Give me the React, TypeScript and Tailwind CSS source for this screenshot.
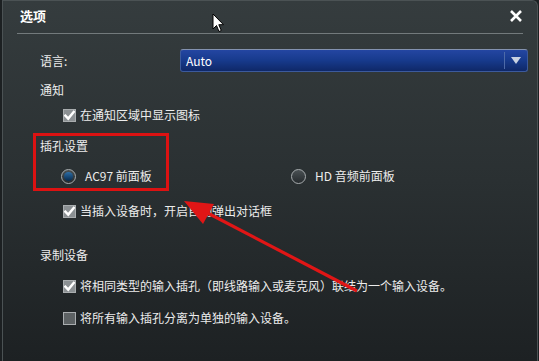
import type React from "react";

const font = '"Noto Sans CJK SC", "Noto Sans", sans-serif';

const Checkbox: React.FC<{ checked?: boolean }> = ({ checked = false }) => (
  <div
    className={`w-[13px] h-[13px] shrink-0 border border-[#a9adaf] flex items-center justify-center ${
      checked ? "bg-[#8b9093]" : "bg-[#5d6264]"
    }`}
  >
    {checked && (
      <svg width="11" height="11" viewBox="0 0 12 12">
        <path
          d="M1.5 6.2 L4.6 9.4 L10.6 2"
          fill="none"
          stroke="#ffffff"
          strokeWidth="2.6"
          strokeLinecap="square"
        />
      </svg>
    )}
  </div>
);

const Radio: React.FC<{ selected?: boolean }> = ({ selected = false }) => (
  <div className="w-[15px] h-[15px] shrink-0 rounded-full border border-[#a7acae] bg-gradient-to-b from-[#4a5154] to-[#262b2e] flex items-center justify-center">
    {selected && (
      <div className="w-[9px] h-[9px] rounded-full bg-gradient-to-b from-[#2d6fa8] to-[#082a4d]" />
    )}
  </div>
);

const CheckRow: React.FC<{ checked?: boolean; label: string; className: string }> = ({
  checked,
  label,
  className,
}) => (
  <div className={`flex items-center h-[18px] pl-[60px] gap-[4px] ${className}`}>
    <Checkbox checked={checked} />
    <span className="text-[12px] text-[#ececec] whitespace-nowrap">{label}</span>
  </div>
);

export default function App() {
  return (
    <div
      className="relative w-[539px] h-[361px] overflow-hidden bg-[#1c2022]"
      style={{ fontFamily: font }}
    >
      <div className="w-[536px] h-[361px] ml-[2px] border-l border-t border-r border-[#4b5254] rounded-tr-[6px] bg-gradient-to-b from-[#353c3e] via-[#2a3032] to-[#1d2123]">
        {/* Header */}
        <div className="flex items-center justify-between h-[32px] pl-[17px] pr-[14px] pb-[2px]">
          <span className="text-[13px] font-bold text-white">选项</span>
          <svg width="14" height="14" viewBox="0 0 14 14">
            <path d="M2 2 L12 12 M12 2 L2 12" stroke="#ffffff" strokeWidth="2.6" />
          </svg>
        </div>
        <div className="ml-[14px] w-[506px] h-[1px] bg-[#737a7c]" />

        {/* Language */}
        <div className="flex items-center mt-[15px] h-[23px]">
          <span className="pl-[37px] w-[177px] text-[12px] text-[#ececec]">语言:</span>
          <div className="flex items-center w-[348px] h-[23px] rounded-[3px] border border-[#3c5a9c] border-t-[#8392b0] bg-gradient-to-b from-[#2446a2] via-[#173a8c] to-[#0f2868]">
            <span className="flex-1 pl-[5px] text-[12px] text-white">Auto</span>
            <div className="w-[1px] h-[17px] bg-[#4d6aa8]" />
            <div className="w-[22px] flex items-center justify-center">
              <svg width="10" height="7" viewBox="0 0 10 7">
                <path d="M0 0 L10 0 L5 7 Z" fill="#c9d2e2" />
              </svg>
            </div>
          </div>
        </div>

        {/* Notification */}
        <div className="mt-[9px] h-[18px] flex items-center pl-[37px] text-[12px] text-[#ececec]">
          通知
        </div>
        <CheckRow checked label="在通知区域中显示图标" className="mt-[7px]" />

        {/* Jack settings */}
        <div className="mt-[13px] h-[18px] flex items-center pl-[37px] text-[12px] text-[#ececec]">
          插孔设置
        </div>
        <div className="mt-[12px] h-[18px] flex items-center text-[12px] text-[#ececec]">
          <div className="flex items-center gap-[9px] pl-[58px] w-[288px]">
            <Radio selected />
            <span>AC97 前面板</span>
          </div>
          <div className="flex items-center gap-[9px]">
            <Radio />
            <span>HD 音频前面板</span>
          </div>
        </div>
        <CheckRow checked label="当插入设备时，开启自动弹出对话框" className="mt-[17px]" />

        {/* Recording */}
        <div className="mt-[26px] h-[18px] flex items-center pl-[37px] text-[12px] text-[#ececec]">
          录制设备
        </div>
        <CheckRow
          checked
          label="将相同类型的输入插孔（即线路输入或麦克风）联结为一个输入设备。"
          className="mt-[13px]"
        />
        <CheckRow label="将所有输入插孔分离为单独的输入设备。" className="mt-[14px]" />
      </div>

      {/* Annotation: red box */}
      <div className="absolute left-[33px] top-[133px] w-[136px] h-[58px] border-[3px] border-[#dc1212]" />

      {/* Annotation: red arrow */}
      <svg className="absolute left-0 top-0" width="539" height="361" viewBox="0 0 539 361">
        <line x1="357" y1="291" x2="200" y2="209" stroke="#e01616" strokeWidth="3.2" />
        <polygon points="184,201 214,204 203,224" fill="#e01616" />
      </svg>

      {/* Mouse cursor */}
      <svg className="absolute left-[212px] top-[13px]" width="14" height="21" viewBox="0 0 14 21">
        <path
          d="M1 1 L1 16 L4.5 12.5 L7 18.5 L9.3 17.5 L6.8 11.7 L11.5 11.7 Z"
          fill="#ffffff"
          stroke="#000000"
          strokeWidth="1"
          strokeLinejoin="round"
        />
      </svg>
    </div>
  );
}
